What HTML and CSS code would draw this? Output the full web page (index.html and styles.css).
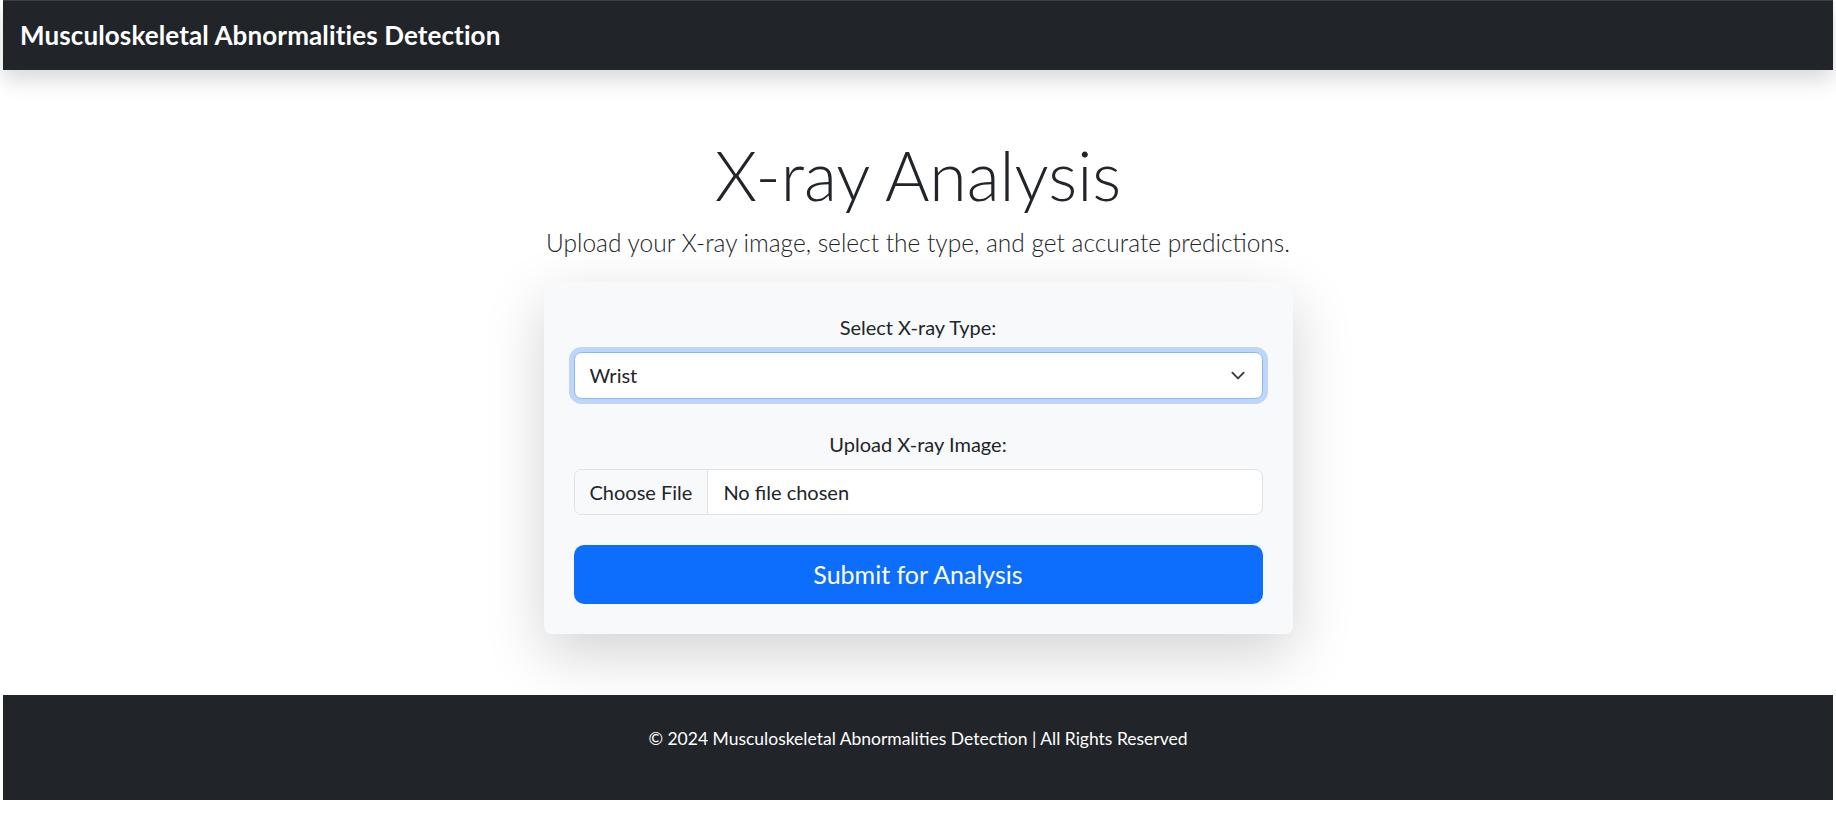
FILE: index.html
```html
<!DOCTYPE html>
<html lang="en">
<head>
<meta charset="utf-8">
<title>Musculoskeletal Abnormalities Detection</title>
<link rel="stylesheet" href="styles.css">
</head>
<body>
<div class="page">
  <nav class="navbar">
    <a class="brand" href="#">Musculoskeletal Abnormalities Detection</a>
  </nav>
  <main class="main">
    <h1 class="title">X-ray Analysis</h1>
    <p class="lead">Upload your X-ray image, select the type, and get accurate predictions.</p>
    <form class="card">
      <div class="field">
        <label class="field-label" for="xtype">Select X-ray Type:</label>
        <div class="select-wrap">
          <select id="xtype" class="select">
            <option>Wrist</option>
            <option>Elbow</option>
            <option>Finger</option>
            <option>Forearm</option>
            <option>Hand</option>
            <option>Humerus</option>
            <option>Shoulder</option>
          </select>
          <svg class="chevron" viewBox="0 0 16 16" aria-hidden="true"><path d="m2 5 6 6 6-6" fill="none" stroke="#343a40" stroke-width="2" stroke-linecap="round" stroke-linejoin="round"/></svg>
        </div>
      </div>
      <div class="field">
        <label class="field-label">Upload X-ray Image:</label>
        <div class="file-input">
          <span class="file-btn">Choose File</span>
          <span class="file-name">No file chosen</span>
        </div>
      </div>
      <button type="button" class="submit">Submit for Analysis</button>
    </form>
  </main>
  <footer class="footer">
    <p class="footer-text">© 2024 Musculoskeletal Abnormalities Detection | All Rights Reserved</p>
  </footer>
</div>
</body>
</html>
```

FILE: styles.css
```css
html, body {
  margin: 0;
  padding: 0;
  background: #fff;
}
body {
  font-family: "Lato", "Open Sans", sans-serif;
  color: #212529;
  font-size: 20px;
  line-height: 1.5;
}
.page {
  padding: 0 3px;
}
.navbar {
  position: relative;
  z-index: 2;
  height: 70px;
  box-sizing: border-box;
  border-top: 1px solid #3b3f44;
  background: #212529;
  display: flex;
  align-items: center;
  padding: 0 15px 0 17px;
  box-shadow: 0 10px 20px rgba(0, 0, 0, 0.15);
}
.brand {
  color: #fff;
  text-decoration: none;
  font-weight: 700;
  font-size: 26px;
  letter-spacing: 0.12px;
  line-height: 37.5px;
}
.main {
  padding: 60px 0 61px;
  text-align: center;
}
.title {
  margin: 0 0 7px;
  padding-top: 3px;
  font-size: 68px;
  line-height: 84px;
  font-weight: 300;
}
.lead {
  margin: 0 0 20px;
  font-size: 24.5px;
  line-height: 37.5px;
  font-weight: 300;
}
.card {
  width: 749px;
  box-sizing: border-box;
  margin: 0 auto;
  padding: 30px;
  background: #f8f9fa;
  border-radius: 7.5px;
  box-shadow: 0 20px 60px rgba(0, 0, 0, 0.175);
  display: flex;
  flex-direction: column;
  gap: 30px;
}
.field {
  display: flex;
  flex-direction: column;
}
.field-label {
  display: block;
  margin-bottom: 10px;
  font-size: 20px;
  line-height: 30px;
}
.select-wrap {
  position: relative;
}
.select {
  display: block;
  width: 100%;
  height: 47.5px;
  box-sizing: border-box;
  padding: 0 45px 0 15px;
  font-family: inherit;
  font-size: 20px;
  color: #212529;
  background: #fff;
  border: 1.25px solid #86b7fe;
  border-radius: 7.5px;
  box-shadow: 0 0 0 5px rgba(13, 110, 253, 0.25);
  appearance: none;
  -webkit-appearance: none;
  outline: none;
}
.chevron {
  position: absolute;
  right: 15px;
  top: 50%;
  width: 20px;
  height: 15px;
  margin-top: -7.5px;
  pointer-events: none;
}
.file-input {
  display: flex;
  align-items: stretch;
  height: 46px;
  box-sizing: border-box;
  background: #fff;
  border: 1.25px solid #dee2e6;
  border-radius: 7.5px;
  overflow: hidden;
  text-align: left;
}
.file-btn {
  display: flex;
  align-items: center;
  padding: 0 15px;
  margin-right: 15px;
  background: #f8f9fa;
  border-right: 1.25px solid #dee2e6;
}
.file-name {
  display: flex;
  align-items: center;
}
.submit {
  display: block;
  width: 100%;
  height: 59px;
  border: none;
  border-radius: 10px;
  background: #0d6efd;
  color: #fff;
  font-family: inherit;
  font-size: 25px;
  line-height: 37.5px;
  cursor: pointer;
}
.footer {
  background: #212529;
  color: #fff;
  text-align: center;
  padding: 29px 0 46px;
}
.footer-text {
  margin: 0;
  font-size: 17.5px;
  line-height: 30px;
}
```
